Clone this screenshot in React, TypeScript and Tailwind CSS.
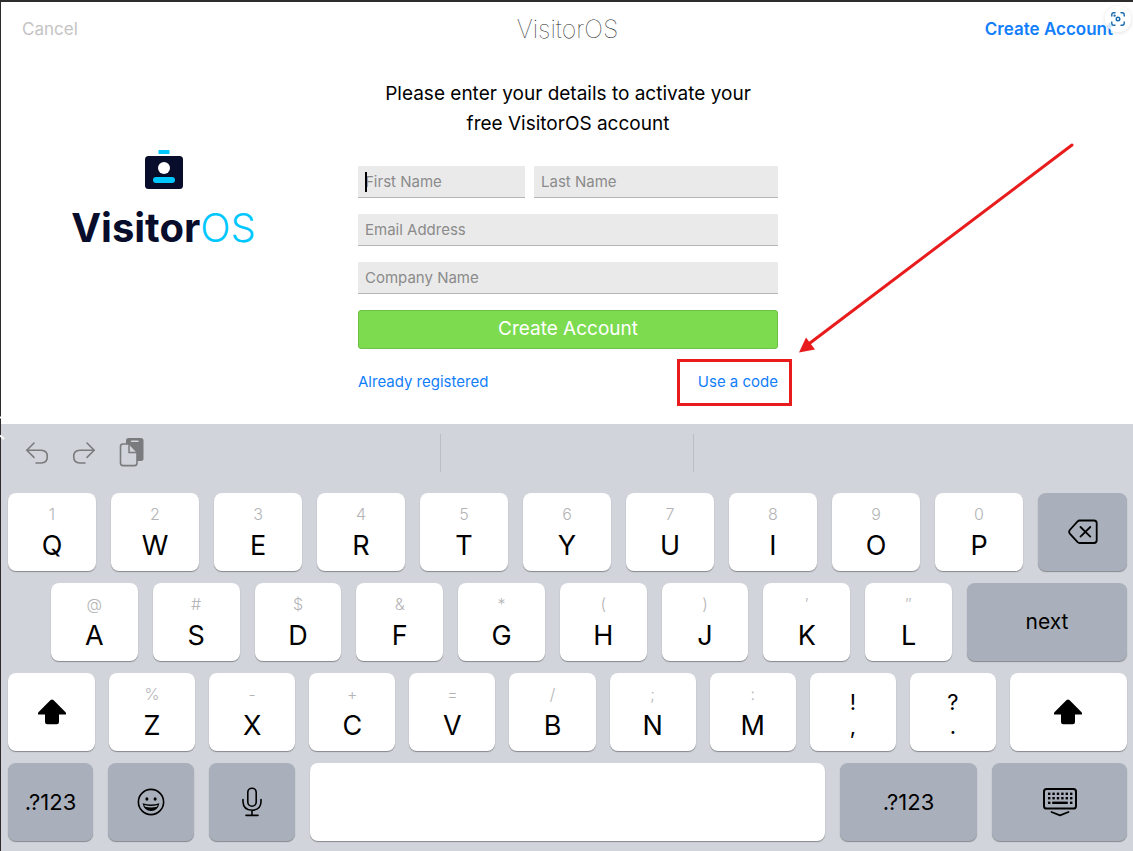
import { type ReactNode } from "react";
import clsx from "clsx";

const ROW_ONE = [
  ["1", "Q"], ["2", "W"], ["3", "E"], ["4", "R"], ["5", "T"],
  ["6", "Y"], ["7", "U"], ["8", "I"], ["9", "O"], ["0", "P"],
];

const ROW_TWO = [
  ["@", "A"], ["#", "S"], ["$", "D"], ["&", "F"], ["*", "G"],
  ["(", "H"], [")", "J"], ["′", "K"], ["″", "L"],
];

const ROW_THREE = [
  ["%", "Z"], ["-", "X"], ["+", "C"], ["=", "V"], ["/", "B"], [";", "N"], [":", "M"],
];

function Key({
  children,
  label,
  dark,
  className,
}: {
  children?: ReactNode;
  label?: string;
  dark?: boolean;
  className?: string;
}) {
  return (
    <button
      type="button"
      aria-label={label}
      className={clsx(
        "flex h-[78px] min-w-0 flex-col items-center justify-center rounded-lg text-black shadow-[0_1px_1px_#85888c]",
        dark ? "bg-[#aab0bb]" : "bg-white",
        className
      )}
    >
      {children}
    </button>
  );
}

function LetterKey({ alt, letter }: { alt: string; letter: string }) {
  return (
    <Key className="flex-1">
      <span className="text-base leading-7 font-light text-[#b4b4b6]">{alt}</span>
      <span className="text-[27px] leading-9">{letter}</span>
    </Key>
  );
}

function PunctuationKey({ top, bottom }: { top: string; bottom: string }) {
  return (
    <Key className="flex-1 pt-1">
      <span className="text-[22px] leading-6">{top}</span>
      <span className="text-[22px] leading-6">{bottom}</span>
    </Key>
  );
}

function ShiftIcon() {
  return (
    <svg width="30" height="26" viewBox="0 0 30 26" fill="currentColor" aria-hidden="true">
      <path d="M13.6 1.1Q15 0 16.4 1.1L28.6 13.2Q29.8 15.4 28 15.6H22V23Q22 25.2 19.8 25.2H10.2Q8 25.2 8 23V15.6H2Q.2 15.4 1.4 13.2Z" />
    </svg>
  );
}

function DeleteIcon() {
  return (
    <svg width="30" height="26" viewBox="0 0 30 26" fill="none" stroke="currentColor" strokeWidth="1.8" strokeLinecap="round" strokeLinejoin="round" aria-hidden="true">
      <path d="M11.5 1.5H26Q28.7 1.5 28.7 4.2V21.3Q28.7 24 26 24H11.5Q10.4 24 9.6 23.2L1.8 14.6Q.5 12.8 1.8 11L9.6 2.3Q10.4 1.5 11.5 1.5Z" />
      <path d="M12.5 8L22.3 17.6M22.3 8L12.5 17.6" />
    </svg>
  );
}

function EmojiIcon() {
  return (
    <svg width="28" height="28" viewBox="0 0 28 28" aria-hidden="true">
      <circle cx="14" cy="14" r="12.6" fill="none" stroke="currentColor" strokeWidth="1.6" />
      <ellipse cx="9.9" cy="11" rx="1.5" ry="1.8" fill="currentColor" />
      <ellipse cx="18.1" cy="11" rx="1.5" ry="1.8" fill="currentColor" />
      <path d="M5.6 15.3Q14 17.8 22.4 15.3Q21 22.8 14 23Q7 22.8 5.6 15.3Z" fill="currentColor" />
      <path d="M7.3 17Q14 18.8 20.7 17L20 18.8Q14 20.3 8 18.8Z" fill="#aab0bb" />
    </svg>
  );
}

function MicIcon() {
  return (
    <svg width="22" height="30" viewBox="0 0 22 30" fill="none" stroke="currentColor" strokeWidth="1.6" strokeLinecap="round" aria-hidden="true">
      <rect x="6.8" y="1.2" width="8.4" height="18" rx="4.2" />
      <path d="M2 12.5V15Q2.4 23 11 23.2Q19.6 23 20 15V12.5M11 23.2V28.4M5 28.4H17" />
    </svg>
  );
}

function HideKeyboardIcon() {
  const dots = [0, 1, 2, 3, 4, 5];
  return (
    <svg width="36" height="30" viewBox="0 0 36 30" fill="none" stroke="currentColor" aria-hidden="true">
      <rect x="2" y="2" width="32" height="19.5" rx="2.6" strokeWidth="2" />
      {dots.map((i) => (
        <g key={i} fill="currentColor" stroke="none">
          <rect x={6 + i * 4.4} y="5.6" width="2.4" height="2.4" />
          <rect x={6 + i * 4.4} y="10" width="2.4" height="2.4" />
        </g>
      ))}
      <g fill="currentColor" stroke="none">
        <rect x="6" y="14.6" width="2.4" height="2.4" />
        <rect x="10.2" y="14.6" width="15.6" height="2.4" />
        <rect x="28" y="14.6" width="2.4" height="2.4" />
      </g>
      <path d="M9.5 25L18 28.3L26.5 25" strokeWidth="1.8" strokeLinecap="round" strokeLinejoin="round" />
    </svg>
  );
}

function UndoIcon({ flipped }: { flipped?: boolean }) {
  return (
    <svg
      width="24"
      height="24"
      viewBox="0 0 24 24"
      fill="none"
      stroke="currentColor"
      strokeWidth="1.6"
      strokeLinecap="round"
      strokeLinejoin="round"
      aria-hidden="true"
      className={flipped ? "-scale-x-100" : undefined}
    >
      <path d="M9 2L1.8 9.2L9 16.4" />
      <path d="M2 9.2H16.2Q22.3 9.4 22.3 15.4Q22.3 21.8 16.2 22H11" />
    </svg>
  );
}

function PasteIcon() {
  return (
    <svg width="26" height="30" viewBox="0 0 26 30" aria-hidden="true">
      <rect x="7" y="1" width="17.5" height="23" rx="2.5" fill="#7a7b7d" />
      <path d="M12.5 4.2H19" stroke="#d1d4da" strokeWidth="1.5" strokeLinecap="round" />
      <path d="M4 7H10.5L18 15V26Q18 28.6 15.5 28.6H4Q1.5 28.6 1.5 26V9.5Q1.5 7 4 7Z" fill="#d1d4da" stroke="#7a7b7d" strokeWidth="1.6" />
      <path d="M10 7.2V15.4H17.8" fill="none" stroke="#7a7b7d" strokeWidth="1.5" />
    </svg>
  );
}

function LensButton() {
  return (
    <button
      type="button"
      aria-label="Visual search"
      className="absolute top-1 right-0.5 flex size-[26px] items-center justify-center rounded-full bg-white/80 shadow-[0_1px_4px_#00000022]"
    >
      <svg width="14" height="14" viewBox="0 0 14 14" fill="none" stroke="#1769ae" strokeWidth="1.4" strokeLinecap="round" aria-hidden="true">
        <path d="M.8 4V2.8Q.8.8 2.8.8H4M10 .8H11.2Q13.2.8 13.2 2.8V4M13.2 10V11.2Q13.2 13.2 11.2 13.2H10M4 13.2H2.8Q.8 13.2.8 11.2V10" />
        <circle cx="7" cy="7" r="1.8" />
        <circle cx="3.6" cy="3.6" r=".5" />
      </svg>
    </button>
  );
}

function Field({ label, className, caret }: { label: string; className?: string; caret?: boolean }) {
  return (
    <div className={clsx("relative", className)}>
      <input
        aria-label={label}
        placeholder={label}
        className="block h-8 w-full border-b border-[#b5b5b5] bg-[#eaeaea] px-[7px] text-[15px] outline-none placeholder:text-[#8b8b8b]"
      />
      {caret && <span className="absolute top-1.5 left-[7px] h-5 w-0.5 bg-black" />}
    </div>
  );
}

function Logo() {
  return (
    <div className="flex flex-col items-center">
      <svg width="38" height="40" viewBox="0 0 38 40" aria-hidden="true">
        <rect x="13.5" y="0" width="11" height="4" fill="#00c8ff" />
        <rect x="0" y="6" width="38" height="33" rx="3.5" fill="#080d2b" />
        <circle cx="19" cy="18" r="6" fill="#fff" />
        <rect x="8" y="27" width="22" height="6" rx="3" fill="#00c8ff" />
      </svg>
      <p className="mt-4 text-[40px] leading-[44px] font-bold text-[#080d2b]">
        Visitor<span className="font-light text-[#00c8ff]">OS</span>
      </p>
    </div>
  );
}

function Keyboard() {
  return (
    <section aria-label="Keyboard" className="bg-[#d1d4da] pr-1.5 pb-2.5 pl-[7px]">
      <div className="flex h-[69px] text-[#7a7b7d]">
        <div className="flex w-[432px] items-start gap-[23px] pt-[13px] pl-[17px]">
          <button type="button" aria-label="Undo" className="pt-1"><UndoIcon /></button>
          <button type="button" aria-label="Redo" className="pt-1"><UndoIcon flipped /></button>
          <button type="button" aria-label="Paste"><PasteIcon /></button>
        </div>
        <div className="mt-2.5 h-[38px] w-[254px] border-x border-[#bbbec4]" />
      </div>

      <div className="space-y-3">
        <div className="flex gap-[15px]">
          {ROW_ONE.map(([alt, letter]) => <LetterKey key={letter} alt={alt} letter={letter} />)}
          <Key dark label="Delete" className="w-[89px]"><DeleteIcon /></Key>
        </div>
        <div className="flex gap-[15px] pl-[43px]">
          {ROW_TWO.map(([alt, letter]) => <LetterKey key={letter} alt={alt} letter={letter} />)}
          <Key dark className="w-40 text-[21px]">next</Key>
        </div>
        <div className="flex gap-[14px]">
          <Key label="Left shift" className="w-[87px]"><ShiftIcon /></Key>
          {ROW_THREE.map(([alt, letter]) => <LetterKey key={letter} alt={alt} letter={letter} />)}
          <PunctuationKey top="!" bottom="," />
          <PunctuationKey top="?" bottom="." />
          <Key label="Right shift" className="w-[117px]"><ShiftIcon /></Key>
        </div>
        <div className="flex gap-[15px]">
          <Key dark className="w-[85px] text-[22px]">.?123</Key>
          <Key dark label="Emoji" className="w-[86px]"><EmojiIcon /></Key>
          <Key dark label="Dictate" className="w-[86px]"><MicIcon /></Key>
          <Key label="Space" className="flex-1" />
          <Key dark className="w-[137px] text-[22px]">.?123</Key>
          <Key dark label="Hide keyboard" className="w-[135px]"><HideKeyboardIcon /></Key>
        </div>
      </div>
    </section>
  );
}

export default function App() {
  return (
    <div className="relative border-t-2 border-l border-[#2e2b2c] bg-white font-['Inter','Liberation_Sans',sans-serif] text-black">
      <header className="relative grid h-14 grid-cols-3 items-center pr-5 pl-[21px]">
        <button type="button" className="justify-self-start text-[17px] text-[#c4c4c4]">Cancel</button>
        <h1 className="text-center text-[25px] font-thin text-[#222]">VisitorOS</h1>
        <button type="button" className="justify-self-end text-[17px] font-semibold text-[#127efb]">Create Account</button>
        <LensButton />
      </header>

      <main className="grid grid-cols-[1fr_420px_1fr] pl-0.5">
        <div className="pt-[92px] pr-[34px]">
          <Logo />
        </div>

        <form className="pt-[21px] pb-[30px]" onSubmit={(e) => e.preventDefault()}>
          <h2 className="text-center text-[19px] leading-[30px]">
            Please enter your details to activate your
            <br />
            free VisitorOS account
          </h2>

          <div className="mt-[27px] flex flex-col gap-4">
            <div className="flex gap-[9px]">
              <Field label="First Name" className="w-[167px]" caret />
              <Field label="Last Name" className="flex-1" />
            </div>
            <Field label="Email Address" />
            <Field label="Company Name" />
            <button type="submit" className="h-[39px] rounded-[3px] border border-[#6cc047] bg-[#7ddb50] text-[19px] text-white">
              Create Account
            </button>
          </div>

          <div className="mt-[21px] flex justify-between text-[15px] leading-6 text-[#127efb]">
            <a href="#login">Already registered</a>
            <div className="relative">
              <a href="#code">Use a code</a>
              {/* callout drawn over the form */}
              <span className="pointer-events-none absolute -top-[11px] -right-3.5 h-[47px] w-[115px] border-3 border-[#e81c1c]" />
              <svg width="280" height="214" viewBox="0 0 280 214" className="pointer-events-none absolute bottom-[39px] left-full ml-[18px] max-w-none" aria-hidden="true">
                <path d="M276 4L14 202" stroke="#e81c1c" strokeWidth="3" strokeLinecap="round" />
                <path d="M3 211.5L10 196.5L19 208.5Z" fill="#e81c1c" />
              </svg>
            </div>
          </div>
        </form>
      </main>

      <Keyboard />

      <svg width="6" height="26" viewBox="0 0 6 26" className="absolute top-[412px] -left-px" aria-hidden="true">
        <path d="M0 3.5H1.5M0 21.5L4 25" stroke="#fff" strokeWidth="2" />
      </svg>
    </div>
  );
}
